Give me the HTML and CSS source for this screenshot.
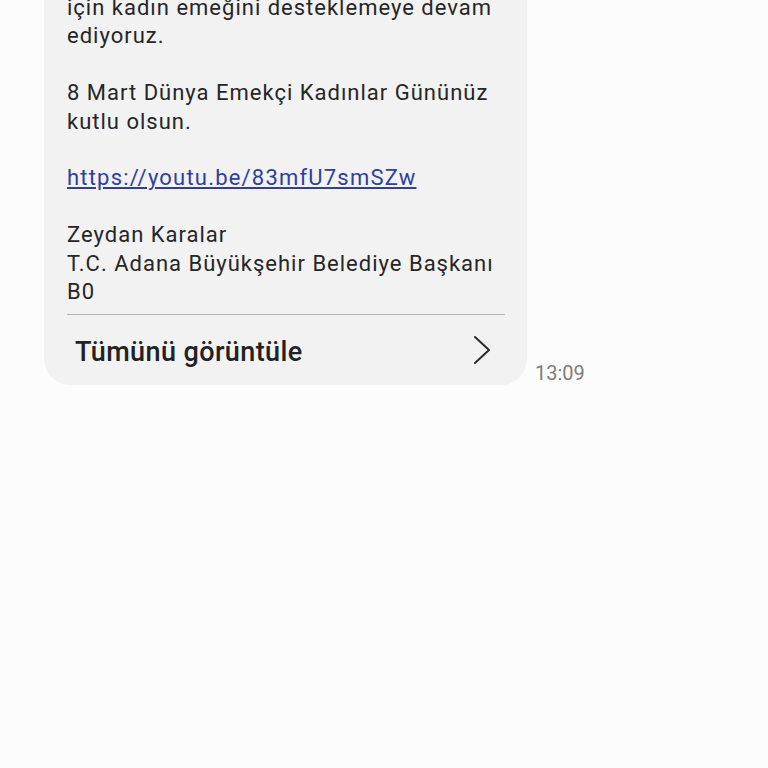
FILE: index.html
```html
<!DOCTYPE html>
<html lang="tr">
<head>
  <meta charset="UTF-8">
  <title>Mesajlar</title>
  <link rel="stylesheet" href="styles.css">
</head>
<body>

  <div class="thread">
    <div class="message-row">
      <div class="bubble">
        <p class="bubble-text">için kadın emeğini desteklemeye devam<br>ediyoruz.</p>
        <p class="bubble-text">8 Mart Dünya Emekçi Kadınlar Gününüz<br>kutlu olsun.</p>
        <p class="bubble-text"><a href="#">https://youtu.be/83mfU7smSZw</a></p>
        <p class="bubble-text">Zeydan Karalar<br>T.C. Adana Büyükşehir Belediye Başkanı<br>B0</p>

        <div class="view-all">
          <span>Tümünü görüntüle</span>
          <!-- chevron -->
          <svg width="20" height="30" viewBox="0 0 20 30">
            <polyline points="3,2 17,15 3,28" fill="none" stroke="#2b2b2b" stroke-width="2" stroke-linecap="round" stroke-linejoin="round"/>
          </svg>
        </div>
      </div>
      <span class="time">13:09</span>
    </div>
  </div>

</body>
</html>
```

FILE: styles.css
```css
body {
  font-family: Roboto, 'Noto Sans', sans-serif;
  background-color: #fcfcfc;
  margin: 0;
}

.thread {
  padding-left: 44px;
  margin-top: -6px;
}

.message-row {
  display: flex;
  align-items: flex-end;
  gap: 8px;
}

.bubble {
  width: 483px;
  box-sizing: border-box;
  background-color: #f2f2f2;
  border-radius: 0 0 26px 26px;
  padding: 0 22px 0 23px;
}

.bubble-text {
  margin: 0 0 28.4px;
  font-size: 22px;
  line-height: 28.4px;
  letter-spacing: 1px;
  color: #262626;
}

.bubble-text:last-of-type {
  margin-bottom: 0;
}

.bubble-text a {
  color: #2f3f9c;
  letter-spacing: 1.2px;
  text-decoration: underline;
}

.view-all {
  display: flex;
  justify-content: space-between;
  align-items: center;
  box-sizing: border-box;
  height: 71px;
  margin-top: 8px;
  padding: 3px 13px 0 8px;
  border-top: 1px solid #b3b3b3;
  font-size: 27px;
  font-weight: 500;
  letter-spacing: 0.4px;
  color: #222;
}

.view-all svg {
  margin-top: -3px;
}

.time {
  font-size: 20px;
  color: #7d7d7d;
}
```
